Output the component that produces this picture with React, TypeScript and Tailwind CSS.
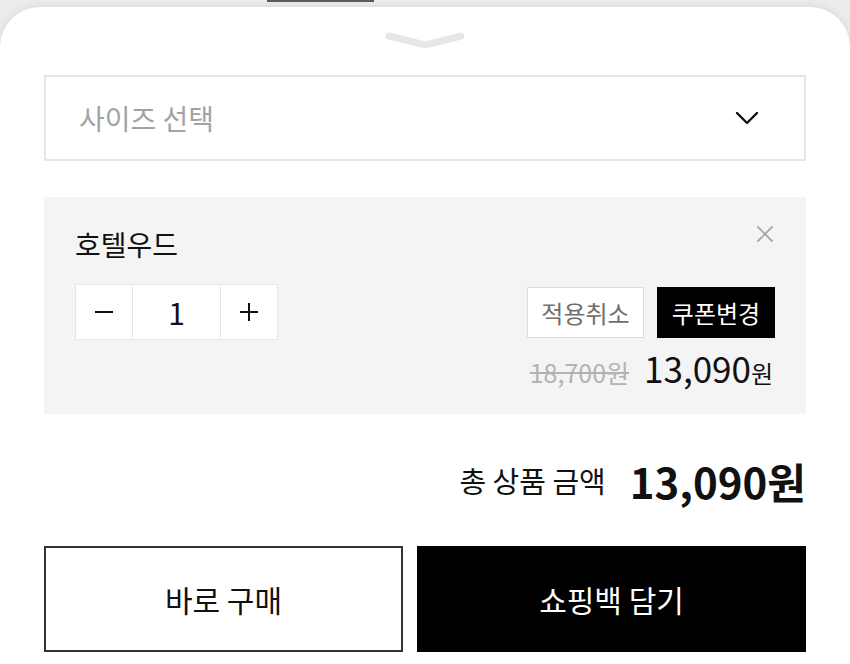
import { useState } from 'react';

const font = { fontFamily: '"Noto Sans CJK KR", "Noto Sans", sans-serif' };

function Chevron() {
  return (
    <svg width="24" height="14" viewBox="0 0 24 14" fill="none">
      <path d="M2 2 L12 12 L22 2" stroke="#111" strokeWidth="2.4" strokeLinecap="round" strokeLinejoin="round" />
    </svg>
  );
}

function CloseIcon() {
  return (
    <svg width="18" height="18" viewBox="0 0 18 18" fill="none">
      <path d="M2 2 L16 16 M16 2 L2 16" stroke="#a8a8a8" strokeWidth="1.8" strokeLinecap="round" />
    </svg>
  );
}

export default function App() {
  const [qty, setQty] = useState(1);

  return (
    <div className="w-[850px] h-[664px] bg-[#ececec] overflow-hidden flex flex-col" style={font}>
      <div className="h-[7px] shrink-0">
        <div className="ml-[267px] w-[107px] h-[2px] bg-[#5c5c5c]" />
      </div>

      <div className="flex-1 bg-white rounded-t-[40px] shadow-[0_-1px_10px_rgba(0,0,0,0.08)] flex flex-col px-[44px]">
        {/* drag handle */}
        <div className="mt-[25px] flex justify-center">
          <svg width="82" height="16" viewBox="0 0 82 16" fill="none">
            <path d="M5 4 L41 13 L77 4" stroke="#e7e7e7" strokeWidth="7" strokeLinecap="round" strokeLinejoin="round" />
          </svg>
        </div>

        {/* size select */}
        <div className="mt-[27px] h-[86px] border-2 border-[#e6e6e6] flex items-center justify-between pl-[33px] pr-[45px]">
          <span className="text-[28px] text-[#a3a3a3] leading-none">사이즈 선택</span>
          <Chevron />
        </div>

        {/* selected option */}
        <div className="mt-[36px] h-[217px] bg-[#f4f4f4] pl-[31px] pr-[31px] flex flex-col">
          <div className="flex justify-between items-start pt-[29px]">
            <span className="text-[28px] leading-[36px] text-[#111]">호텔우드</span>
            <span className="mt-[-1px] mr-[1px]">
              <CloseIcon />
            </span>
          </div>

          <div className="mt-[22px] flex justify-between items-start">
            <div className="flex h-[56px] bg-white border border-[#e6e6e6]">
              <button
                className="w-[57px] flex items-center justify-center border-r border-[#e6e6e6]"
                onClick={() => setQty(Math.max(1, qty - 1))}
              >
                <span className="block w-[18px] h-[2px] bg-[#111]" />
              </button>
              <div className="w-[87px] flex items-center justify-center text-[30px] text-[#111]">{qty}</div>
              <button
                className="w-[57px] flex items-center justify-center border-l border-[#e6e6e6]"
                onClick={() => setQty(qty + 1)}
              >
                <svg width="20" height="20" viewBox="0 0 20 20">
                  <path d="M10 1 V19 M1 10 H19" stroke="#111" strokeWidth="2" />
                </svg>
              </button>
            </div>

            <div className="flex flex-col items-end mt-[3px]">
              <div className="flex gap-[13px]">
                <button className="w-[117px] h-[51px] bg-white border border-[#dcdcdc] text-[24px] text-[#6f6f6f]">
                  적용취소
                </button>
                <button className="w-[118px] h-[51px] bg-black text-[24px] text-white">쿠폰변경</button>
              </div>
              <div className="mt-[10px] flex items-baseline gap-[15px] pr-[2px]">
                <span className="text-[25px] text-[#b3b3b3] line-through">18,700원</span>
                <span className="text-[35px] text-[#111] leading-[40px]">
                  13,090<span className="text-[24px]">원</span>
                </span>
              </div>
            </div>
          </div>
        </div>

        {/* total */}
        <div className="mt-[39px] h-[56px] flex justify-end items-center gap-[24px]">
          <span className="text-[29px] text-[#111]">총 상품 금액</span>
          <span className="text-[42px] font-bold text-[#111] leading-none">13,090원</span>
        </div>

        {/* actions */}
        <div className="mt-[37px] h-[106px] flex gap-[14px]">
          <button className="w-[359px] border-2 border-[#333] bg-white text-[30px] text-[#111]">
            바로 구매
          </button>
          <button className="flex-1 bg-black text-[30px] text-white">쇼핑백 담기</button>
        </div>
      </div>
    </div>
  );
}
